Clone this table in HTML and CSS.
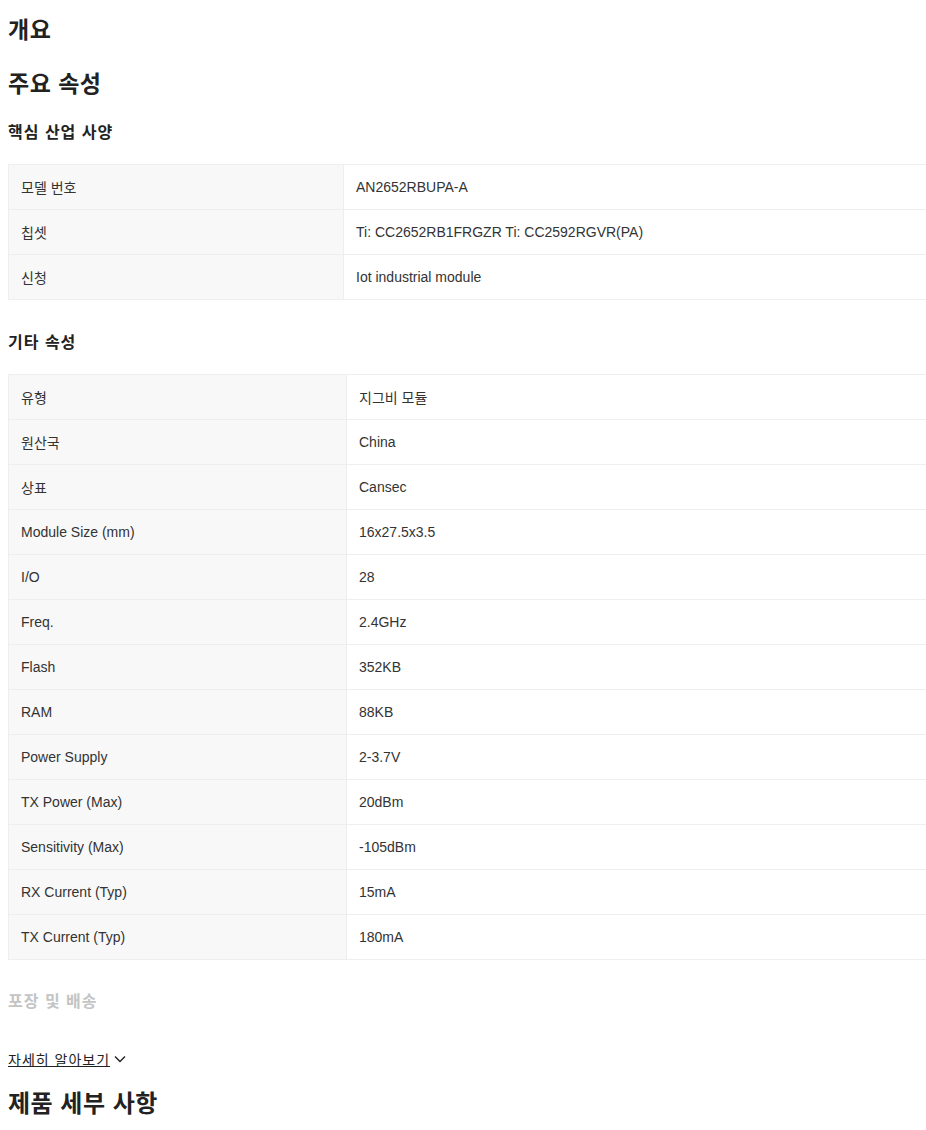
FILE: index.html
```html
<!DOCTYPE html>
<html lang="ko">
<head>
  <meta charset="UTF-8" />
  <meta name="viewport" content="width=device-width, initial-scale=1.0"/>
  <title>개요</title>
  <link rel="stylesheet" href="styles.css">
</head>
<body>
  <div class="page">
    <h2 class="title">개요</h2>
    <h2 class="title">주요 속성</h2>

    <h3 class="group">핵심 산업 사양</h3>
    <table class="attrs first">
      <tr><td class="key">모델 번호</td><td>AN2652RBUPA-A</td></tr>
      <tr><td class="key">칩셋</td><td>Ti: CC2652RB1FRGZR Ti: CC2592RGVR(PA)</td></tr>
      <tr><td class="key">신청</td><td>Iot industrial module</td></tr>
    </table>

    <h3 class="group">기타 속성</h3>
    <table class="attrs second">
      <tr><td class="key">유형</td><td>지그비 모듈</td></tr>
      <tr><td class="key">원산국</td><td>China</td></tr>
      <tr><td class="key">상표</td><td>Cansec</td></tr>
      <tr><td class="key">Module Size (mm)</td><td>16x27.5x3.5</td></tr>
      <tr><td class="key">I/O</td><td>28</td></tr>
      <tr><td class="key">Freq.</td><td>2.4GHz</td></tr>
      <tr><td class="key">Flash</td><td>352KB</td></tr>
      <tr><td class="key">RAM</td><td>88KB</td></tr>
      <tr><td class="key">Power Supply</td><td>2-3.7V</td></tr>
      <tr><td class="key">TX Power (Max)</td><td>20dBm</td></tr>
      <tr><td class="key">Sensitivity (Max)</td><td>-105dBm</td></tr>
      <tr><td class="key">RX Current (Typ)</td><td>15mA</td></tr>
      <tr><td class="key">TX Current (Typ)</td><td>180mA</td></tr>
    </table>

    <h3 class="group muted">포장 및 배송</h3>

    <div class="more-row">
      <a class="more" href="#">자세히 알아보기</a><svg class="chev" width="14" height="14" viewBox="0 0 14 14"><path d="M2 4.5 L7 9.5 L12 4.5" fill="none" stroke="#222" stroke-width="1.4"/></svg>
    </div>

    <h2 class="title big">제품 세부 사항</h2>
  </div>
</body>
</html>
```

FILE: styles.css
```css
html, body {
  overflow: hidden;
}
body {
  margin: 0;
  font-family: "Liberation Sans", Arial, "Noto Sans CJK KR", sans-serif;
  color: #222;
  background: #fff;
}
.page {
  padding: 0 8px;
  width: 1100px;
}
.title {
  font-size: 23px;
  font-weight: bold;
  margin: 0;
  height: 54px;
  line-height: 60px;
  letter-spacing: 0.5px;
}
.big {
  font-size: 24px;
  margin-top: 4px;
}
.group {
  font-size: 16px;
  font-weight: bold;
  margin: 0;
  height: 56px;
  line-height: 50px;
  color: #222;
  letter-spacing: 1px;
}
.muted {
  color: #c4c4c4;
  height: 62px;
  line-height: 32px;
  margin-top: 26px;
}
.attrs {
  border-collapse: collapse;
  width: 1050px;
  font-size: 14px;
  color: #333;
  margin-bottom: 18px;
}
.attrs td {
  border: 1px solid #eeeeee;
  height: 45px;
  padding: 0 12px;
  box-sizing: border-box;
}
.attrs .key {
  background: #f8f8f8;
}
.first .key {
  width: 335px;
}
.second .key {
  width: 338px;
}
.more-row {
  height: 22px;
  display: flex;
  align-items: center;
}
.more {
  font-size: 14px;
  color: #222;
  text-decoration: underline;
  letter-spacing: 1px;
}
.chev {
  margin-left: 3px;
}
```
